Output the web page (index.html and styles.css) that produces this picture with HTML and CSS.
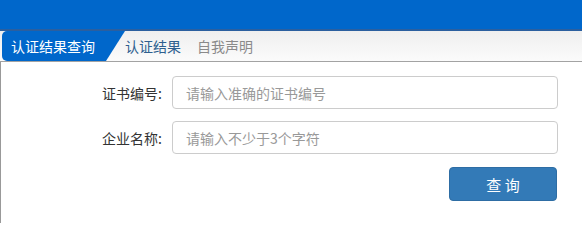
FILE: index.html
```html
<!DOCTYPE html>
<html lang="zh-CN">
<head>
<meta charset="utf-8">
<title>认证结果查询</title>
<link rel="stylesheet" href="styles.css">
</head>
<body>
<div class="topbar"></div>
<div class="tabs">
  <div class="tab tab-active">认证结果查询</div>
  <div class="tab tab-link">认证结果</div>
  <div class="tab tab-muted">自我声明</div>
</div>
<div class="panel">
  <form class="form">
    <div class="row">
      <label class="label">证书编号:</label>
      <input class="input" type="text" placeholder="请输入准确的证书编号">
    </div>
    <div class="row">
      <label class="label">企业名称:</label>
      <input class="input" type="text" placeholder="请输入不少于3个字符">
    </div>
    <div class="actions">
      <button class="btn" type="button">查&nbsp;询</button>
    </div>
  </form>
</div>
</body>
</html>
```
FILE: styles.css
```css
* { box-sizing: border-box; }
html, body { margin: 0; padding: 0; background: #fff; }
body {
  font-family: "Noto Sans CJK SC", "Microsoft YaHei", sans-serif;
  font-size: 14px;
  color: #333;
  width: 582px;
  height: 223px;
  overflow: hidden;
}
.topbar {
  height: 31px;
  background: #0067cb;
  border-bottom: 2px solid #2b5f9f;
}
.tabs {
  height: 31px;
  display: flex;
  align-items: stretch;
  gap: 16px;
  padding-left: 2px;
  background: linear-gradient(#efefef, #fbfbfb);
  border-bottom: 1px solid #a3a3a3;
}
.tab {
  display: flex;
  align-items: center;
  line-height: 1;
  white-space: nowrap;
}
.tab-active {
  width: 123px;
  padding-left: 9px;
  margin-right: -16px;
  background: #0067cb;
  color: #fff;
  border-radius: 5px 0 0 5px;
  clip-path: polygon(0 0, 100% 0, calc(100% - 19px) 100%, 0 100%);
}
.tab-link { color: #2e5f8f; }
.tab-muted { color: #8a8a8a; }
.panel {
  border-left: 1px solid #999;
  height: 161px;
  padding-top: 14px;
}
.form {
  display: flex;
  flex-direction: column;
  gap: 12px;
  margin: 0;
}
.row {
  display: flex;
  align-items: center;
}
.label {
  width: 162px;
  text-align: right;
  padding-right: 1px;
  margin-right: 9px;
  color: #333;
}
.input {
  width: 386px;
  height: 33px;
  border: 1px solid #ccc;
  border-radius: 4px;
  padding: 0 13px;
  font: inherit;
  color: #555;
  outline: none;
}
.input::placeholder { color: #999; }
.actions {
  display: flex;
  justify-content: flex-end;
  padding-right: 25px;
  margin-top: 1px;
}
.btn {
  width: 108px;
  height: 34px;
  background: #337ab7;
  border: 1px solid #2e6da4;
  border-radius: 4px;
  color: #fff;
  font: inherit;
  font-size: 15px;
  padding: 0;
}
```
